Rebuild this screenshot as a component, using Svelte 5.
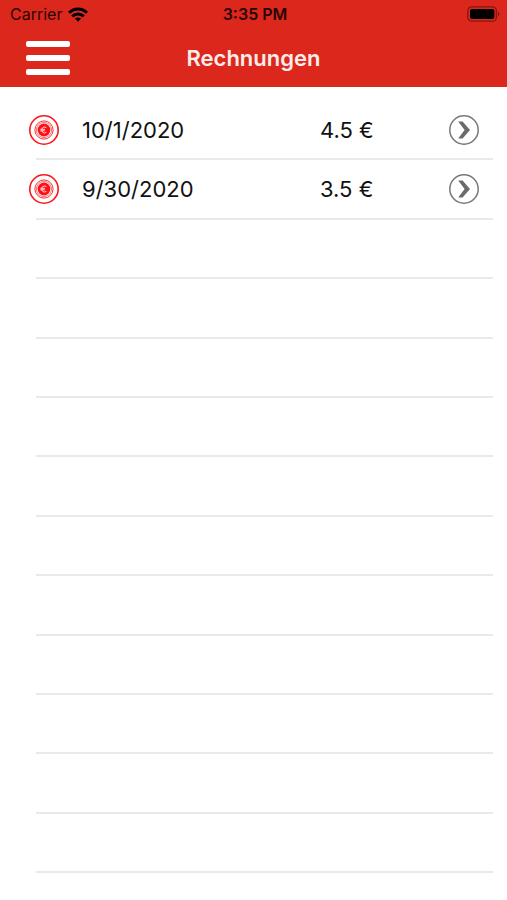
<script>
  const ROWS = 13

  let invoices = $state([
    { date: '10/1/2020', amount: '4.5 €' },
    { date: '9/30/2020', amount: '3.5 €' },
  ])

  let emptyRows = $derived(Math.max(0, ROWS - invoices.length))
</script>

<div class="screen">
  <header>
    <div class="status">
      <div class="carrier">
        <span>Carrier</span>
        <svg width="20" height="15" viewBox="0 0 20 15" aria-hidden="true">
          <g fill="none" stroke="#000" stroke-width="2.9">
            <path d="M1 5.8C6 .7 14 .7 19 5.8" />
            <path d="M4.2 9.4C7.5 6.2 12.5 6.2 15.8 9.4" />
          </g>
          <path d="M6.9 11.6C8.6 10 11.4 10 13.1 11.6L10 14.8Z" />
        </svg>
      </div>
      <span class="time">3:35 PM</span>
      <svg class="battery" width="33" height="16" viewBox="0 0 33 16" aria-hidden="true">
        <rect x="0.8" y="0.8" width="28.6" height="14.4" rx="4" fill="none" stroke="#000" stroke-opacity=".4" stroke-width="1.3" />
        <rect x="3" y="3" width="24.4" height="10" rx="2" />
        <path d="M31 5.6C32.8 6.4 32.8 9.6 31 10.4Z" fill-opacity=".4" />
      </svg>
    </div>
    <nav>
      <button class="menu" aria-label="Menü">
        <span></span>
        <span></span>
        <span></span>
      </button>
      <h1>Rechnungen</h1>
    </nav>
  </header>

  <ul>
    {#each invoices as invoice}
      <li>
        <div class="row">
          <svg width="30" height="30" viewBox="0 0 30 30" aria-hidden="true">
            <g fill="none" stroke="#f8161b">
              <circle cx="15" cy="15" r="14.2" stroke-width="1.6" />
              <circle cx="15" cy="15" r="9.1" stroke-width=".9" />
              <circle cx="15" cy="15" r="7.6" stroke-width=".6" />
            </g>
            <circle cx="15" cy="15" r="6.4" fill="#ff1016" />
            <path d="M17.4 12.6A3 3 0 1 0 17.4 17.4M11.4 14.3H16M11.4 15.8H16" fill="none" stroke="#ffd9d9" stroke-width="1" />
          </svg>
          <span class="date">{invoice.date}</span>
          <span class="amount">{invoice.amount}</span>
          <button class="open" aria-label="Rechnung vom {invoice.date} öffnen">
            <svg width="30" height="30" viewBox="0 0 30 30" aria-hidden="true">
              <circle cx="15" cy="15" r="14.2" fill="none" stroke="#777" stroke-width="1.5" />
              <path d="M9.2 6.4H13.6L21 15L13.6 23.6H9.2L15.6 15Z" fill="#6b6b6b" />
            </svg>
          </button>
        </div>
      </li>
    {/each}
    {#each { length: emptyRows } as _}
      <li aria-hidden="true"></li>
    {/each}
  </ul>
</div>

<style>
  :global(body) { margin: 0; background: #fff; }
  .screen {
    display: flex;
    flex-direction: column;
    min-height: 100vh;
    font-family: Inter, 'Liberation Sans', sans-serif;
    color: #111;
  }
  header { background: #db271c; }
  .status {
    display: grid;
    grid-template-columns: 1fr auto 1fr;
    align-items: center;
    height: 28px;
    padding: 0 7px 0 10px;
    color: #2b0505;
    font-size: 16px;
  }
  .carrier { display: flex; align-items: center; gap: 6px; }
  .time { font-weight: 600; }
  .battery { justify-self: end; }
  nav {
    display: grid;
    grid-template-columns: 1fr auto 1fr;
    align-items: center;
    height: 59px;
    padding: 0 26px;
  }
  .menu {
    display: flex;
    flex-direction: column;
    gap: 8px;
    width: 44px;
    padding: 0;
    border: none;
    background: none;
    cursor: pointer;
  }
  .menu span { height: 6px; border-radius: 2px; background: #fff; }
  h1 { margin: 0; font-size: 22px; font-weight: 600; color: #fdecea; }
  ul {
    flex: 1;
    display: flex;
    flex-direction: column;
    margin: 0;
    padding: 14px 0 27px;
    list-style: none;
  }
  li {
    flex: 1 0 59px;
    display: flex;
    flex-direction: column;
    justify-content: flex-end;
  }
  li::after {
    content: '';
    height: 2px;
    margin: 0 14px 0 36px;
    background: #e9e9e9;
  }
  .row {
    flex: 1;
    display: grid;
    grid-template-columns: 53px 1fr 129px 30px;
    align-items: center;
    padding: 0 28px 0 29px;
    font-size: 22px;
  }
  .row svg { display: block; }
  .open {
    padding: 0;
    border: none;
    background: none;
    cursor: pointer;
  }
</style>
